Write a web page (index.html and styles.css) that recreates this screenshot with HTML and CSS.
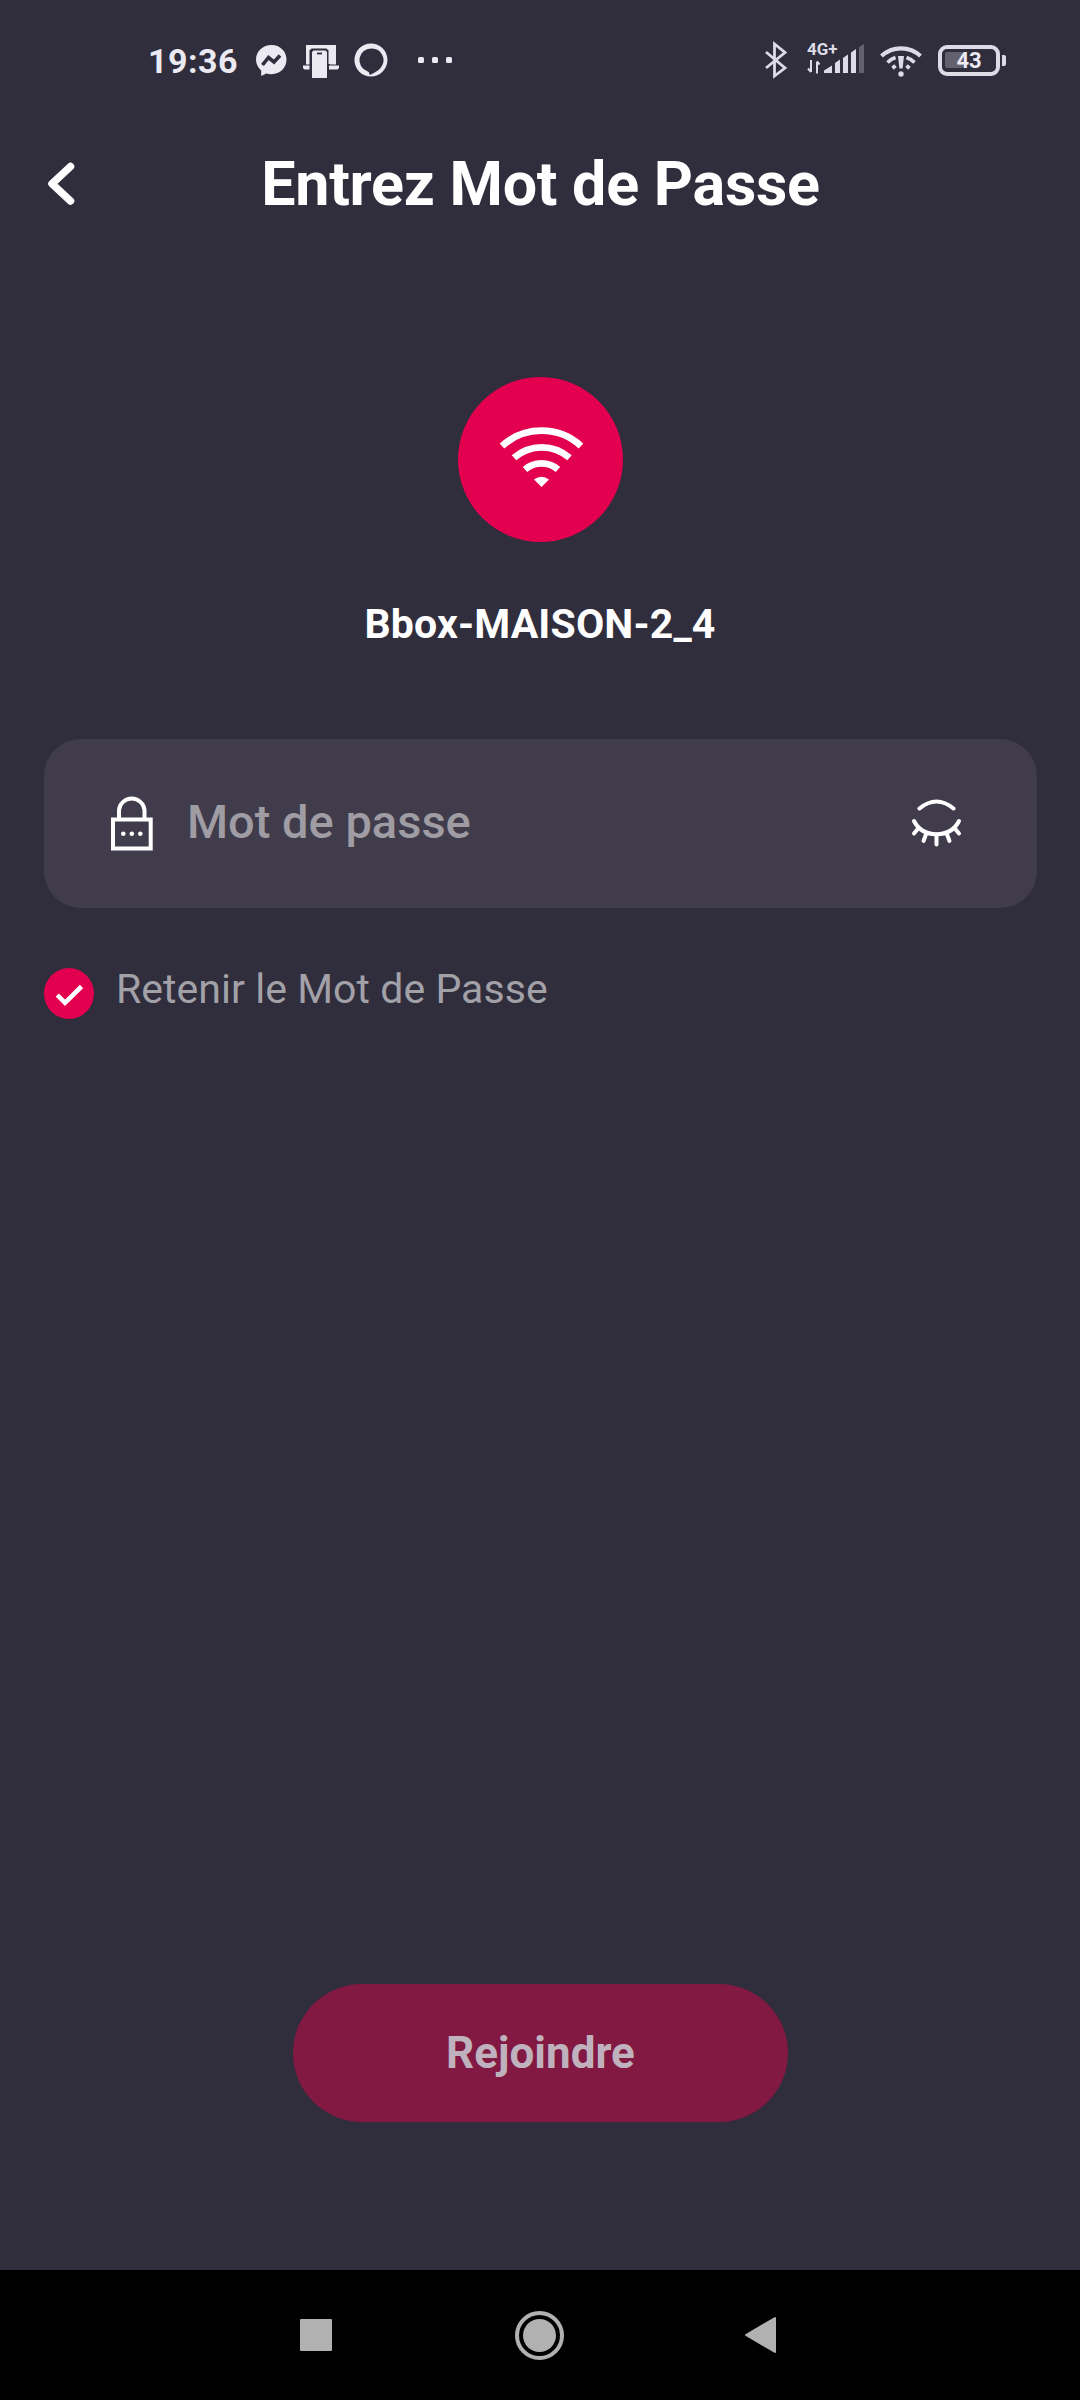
FILE: index.html
```html
<!DOCTYPE html>
<html lang="fr">
<head>
<meta charset="utf-8">
<title>Entrez Mot de Passe</title>
<link rel="stylesheet" href="styles.css">
</head>
<body>
<div class="screen">
  <div class="status">
    <span class="time">19:36</span>
    <svg class="ic-messenger" width="34" height="36" viewBox="255 42 34 36">
      <path fill="#ebe9f2" d="M271.5 45c-8.600 0-15.500 6.300-15.500 14.600 0 4.500 2 8.200 5.200 10.800v5.600l5-2.600c1.700.5 3.500.8 5.300.8 8.600 0 15-6.300 15-14.600S280.100 45 271.500 45z"/>
      <path fill="none" stroke="#302d3d" stroke-width="3.600" d="M262.500 65l6-7.500 5.500 4.500 6-6.500"/>
    </svg>
    <svg class="ic-devices" width="38" height="36" viewBox="302 43 38 36">
      <path fill="#ebe9f2" d="M306 45h30v19.500h-6V49.500h-19v15h-5zM303 65.500h7v4h-5.500l-1.500-1.500zM329 65.500h10v2.500l-1.500 1.500H329zM311 49h19v15h-19z"/>
      <path fill="#302d3d" d="M309.500 50.500l2-2h15l2 2V78h-19z"/>
      <path fill="#ebe9f2" d="M312 52l1.500-1.500h12L327 52v26h-15z"/>
      <path stroke="#302d3d" stroke-width="1.800" d="M317 53.500h5"/>
    </svg>
    <svg class="ic-alexa" width="36" height="36" viewBox="353 42 36 36">
      <path fill="#ebe9f2" fill-rule="evenodd" d="M371 43.500a16.500 16.500 0 1 1-.1 33 16.500 16.500 0 1 1 .1-33zM371 48.500a11.700 11.700 0 0 0-3.600 22.800q2 .7 2 3l1 .5q7.500-3.500 10.500-7.300a11.700 11.700 0 0 0-9.900-19z"/>
    </svg>
    <svg class="ic-more" width="38" height="8" viewBox="416 56 38 8" fill="#ebe9f2">
      <rect x="418" y="57" width="6" height="6" rx="1.500"/><rect x="432" y="57" width="6" height="6" rx="1.500"/><rect x="446" y="57" width="6" height="6" rx="1.500"/>
    </svg>
    <svg class="ic-bt" width="24" height="38" viewBox="764 41 24 38">
      <path fill="none" stroke="#dddbe6" stroke-width="2.800" d="M766 52l19 16-10.500 8V44L785 52.500 766 68"/>
    </svg>
    <div class="signal">
      <span class="net">4G+</span>
      <svg class="bars" width="57" height="34" viewBox="807 44 57 34">
        <path fill="none" stroke="#dddbe6" stroke-width="2" d="M811 61v12M808 69.500l3 3.500M817 74.500V62.500M817 62.500l2.500 3"/>
        <path fill="#dddbe6" d="M824 74v-2.500l8-5V74zM835 64l5-3.500V74h-5zM843 59l5-3.500V74h-5zM851 53.500l5-3.500V74h-5z"/>
        <path fill="#64616f" d="M859 48l5-3v29h-5z"/>
      </svg>
    </div>
    <svg class="ic-wifi" width="44" height="34" viewBox="879 44 44 34">
      <g fill="none" stroke="#dddbe6">
        <path stroke-width="4.200" d="M881.500 56a28.500 28.500 0 0 1 39 0"/>
        <path stroke-width="3.800" d="M887.500 62.500q3.500-3.500 8-5M914.500 62.500q-3.500-3.500-8-5M892.500 68.200l3-2.600M909.500 68.200l-3-2.600"/>
      </g>
      <path fill="#dddbe6" d="M898 56h6l-1.400 12.500h-3.200z"/><circle cx="901" cy="74" r="2.700" fill="#dddbe6"/>
    </svg>
    <div class="battery"><span class="level"></span><span class="pct">43</span><span class="nub"></span></div>
  </div>

  <div class="header">
    <svg class="back" width="32" height="48" viewBox="46 160 32 48">
      <path fill="none" stroke="#fff" stroke-width="7.500" stroke-linecap="round" stroke-linejoin="round" d="M70.500 166.500L52 183.700 70.500 201"/>
    </svg>
    <h1 class="title">Entrez Mot de Passe</h1>
  </div>

  <div class="network">
    <div class="badge">
      <svg width="90" height="70" viewBox="495 425.500 90 70">
        <g fill="none" stroke="#fff" stroke-width="6.800">
          <path d="M502 446.500a58.500 58.500 0 0 1 79 0"/>
          <path d="M514 458.300a42 42 0 0 1 55.500 0"/>
          <path d="M525 470a25.500 25.500 0 0 1 33 0"/>
        </g>
        <path fill="#fff" d="M534 480q7.500-5.500 15 0l-7.500 7.500z"/>
      </svg>
    </div>
    <div class="ssid">Bbox-MAISON-2_4</div>
  </div>

  <div class="field">
    <svg class="lock" width="44" height="56" viewBox="110 795.500 44 56">
      <g fill="none" stroke="#fff" stroke-width="4">
        <path d="M119 818v-8.500a12.800 12.500 0 0 1 25.500 0v8.500"/>
        <rect x="113" y="819" width="37.700" height="29"/>
      </g>
      <g fill="#fff"><circle cx="123.300" cy="833.300" r="2.300"/><circle cx="131.800" cy="833.300" r="2.300"/><circle cx="140.300" cy="833.300" r="2.300"/></g>
    </svg>
    <span class="placeholder">Mot de passe</span>
    <svg class="eye" width="54" height="52" viewBox="910 797.500 54 52">
      <g fill="none" stroke="#fff" stroke-width="4" stroke-linecap="round">
        <path d="M919.500 808q17-14 34 0"/>
        <path d="M914 820.500q6.500 13 22.500 13.300 16-.3 22.500-13.300"/>
        <path d="M918.500 827.500l-4.500 5.500M926.500 832.500l-3 8M936.500 834v10M946.500 832.500l3 8M954.500 827.500l4.500 5.500"/>
      </g>
    </svg>
  </div>

  <div class="remember">
    <span class="check">
      <svg width="51" height="51" viewBox="44.500 968 51 51"><path fill="none" stroke="#fff" stroke-width="4.600" d="M57.800 995l7.700 7.800L82 986.500"/></svg>
    </span>
    <span class="remember-text">Retenir le Mot de Passe</span>
  </div>

  <div class="join">Rejoindre</div>

  <div class="navbar">
    <span class="recent"></span>
    <span class="home"><span class="home-dot"></span></span>
    <svg class="nav-back" width="32" height="38" viewBox="729 2316.500 32 38"><path fill="#b1b1b1" stroke="#b1b1b1" stroke-width="2" stroke-linejoin="round" d="M730 2335.500l29-17v34z"/></svg>
  </div>
</div>
</body>
</html>
```
FILE: styles.css
```css
* { box-sizing: border-box; }
body { margin: 0; background: #302d3d; font-family: Roboto, "Noto Sans", sans-serif; }
svg { display: block; flex: none; }
.screen { width: 1080px; height: 2400px; display: flex; flex-direction: column; background: #302d3d; overflow: hidden; }

.status { height: 120px; display: flex; align-items: center; padding-left: 148px; color: #ebe9f2; }
.time { width: 107px; font-size: 34px; font-weight: 700; line-height: 40px; letter-spacing: 0.5px; padding-top: 2px; white-space: nowrap; }
.ic-devices { margin: 2px 0 0 13px; }
.ic-alexa { margin-left: 13px; }
.ic-more { margin-left: 27px; }
.ic-bt { margin-left: 310px; }
.signal { position: relative; margin-left: 19px; }
.net { position: absolute; left: 0; top: -4px; font-size: 17px; line-height: 20px; font-weight: 700; color: #dddbe6; }
.ic-wifi { margin: 2px 0 0 15px; }
.battery { position: relative; width: 62px; height: 31px; margin-left: 15px; border: 4px solid #dddbe6; border-radius: 9px; display: flex; align-items: center; justify-content: center; }
.level { position: absolute; left: 3px; top: 3px; width: 18px; height: 16px; border-radius: 2px; background: #64616f; }
.pct { position: relative; padding-top: 2px; font-size: 22px; line-height: 24px; font-weight: 700; color: #ebe9f2; }
.nub { position: absolute; right: -10px; top: 6px; width: 4px; height: 11px; border-radius: 0 2px 2px 0; background: #dddbe6; }

.header { height: 128px; display: grid; grid-template-columns: 78px 1fr 78px; align-items: center; }
.back { margin-left: 46px; }
.title { margin: 0; padding-left: 1px; text-align: center; color: #fff; font-size: 61px; line-height: 72px; font-weight: 700; letter-spacing: -0.25px; white-space: nowrap; }

.network { margin-top: 129px; display: flex; flex-direction: column; align-items: center; }
.badge { width: 165px; height: 165px; border-radius: 50%; background: #e3004f; display: flex; align-items: center; justify-content: center; }
.ssid { margin-top: 58px; color: #fff; font-size: 41px; line-height: 48px; font-weight: 700; letter-spacing: 0.15px; white-space: nowrap; }

.field { height: 169px; margin: 91px 43px 0 44px; padding: 0 73px 0 66px; border-radius: 37px; background: #403c4c; display: flex; align-items: center; }
.placeholder { flex: 1; margin: 0 0 3px 33px; color: #9f9da3; font-size: 47px; line-height: 54px; font-weight: 500; }

.remember { margin: 60px 0 0 44px; height: 51px; display: flex; align-items: center; }
.check { width: 50px; height: 51px; border-radius: 50%; background: #e3004f; display: flex; justify-content: center; }
.remember-text { margin: -10px 0 0 22px; color: #a3a1a8; font-size: 41px; line-height: 48px; letter-spacing: 0.05px; white-space: nowrap; }

.join { margin: auto auto 148px 293px; width: 495px; height: 138px; border-radius: 69px; background: #821942; color: #bfb1bd; font-size: 44px; line-height: 138px; font-weight: 700; text-align: center; }

.navbar { height: 130px; background: #000; display: flex; align-items: center; padding-left: 300px; }
.recent { width: 32px; height: 32px; border-radius: 1px; background: #b1b1b1; }
.home { width: 49px; height: 49px; margin-left: 183px; border: 4px solid #b1b1b1; border-radius: 50%; display: flex; align-items: center; justify-content: center; }
.home-dot { width: 33px; height: 33px; border-radius: 50%; background: #b1b1b1; }
.nav-back { margin-left: 181px; }
```
